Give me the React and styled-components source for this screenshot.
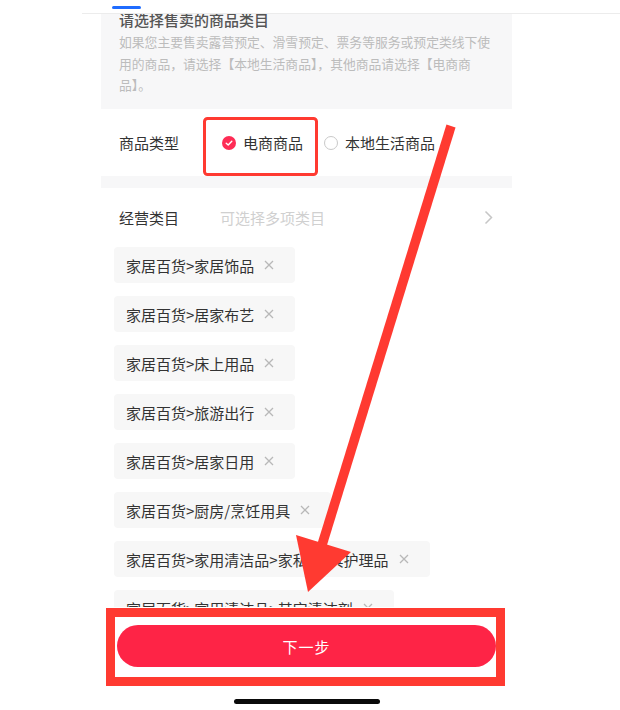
import React from 'react'
import styled, { createGlobalStyle } from 'styled-components'

//-- category picker step, with the red review annotations drawn over it

const GlobalStyle = createGlobalStyle`
  html, body {
    margin: 0;
    padding: 0;
    background: #fff;
  }
  body {
    font-family: "Noto Sans CJK SC", "Noto Sans", sans-serif;
  }
`;

const Page = styled.div`
  position: relative;
  width: 620px;
  height: 710px;
  overflow: hidden;
  background: #fff;
`;

const TopBar = styled.div`
  margin-left: 82px;
  height: 14px;
  box-sizing: border-box;
  padding: 6px 0 0 30px;
  border-bottom: 1px solid #ececec;
`;

const TabIndicator = styled.div`
  width: 29px;
  height: 3px;
  border-radius: 2px;
  background: #1f6cff;
`;

const Column = styled.div`
  margin-left: 101px;
  width: 411px;
  display: flex;
  flex-direction: column;
`;

const Scroll = styled.div`
  height: 593px;
  overflow: hidden;
  display: flex;
  flex-direction: column;
`;

const Notice = styled.div`
  margin-top: -5px;
  padding: 0 12px 13.5px 18px;
  background: #f7f7f8;
`;

const NoticeTitle = styled.div`
  font-size: 15px;
  line-height: 22px;
  font-weight: 500;
  color: #555;
`;

const NoticeText = styled.div`
  font-size: 12.8px;
  line-height: 21.5px;
  color: #bcbcbc;
`;

const FieldRow = styled.div`
  height: ${p => p.$height}px;
  padding: 0 19px 0 18px;
  display: flex;
  align-items: center;
  flex-shrink: 0;
`;

const FieldLabel = styled.div`
  flex: 0 0 ${p => p.$width}px;
  font-size: 15px;
  color: #333;
`;

const RadioGroup = styled.div`
  display: flex;
  align-items: center;
  gap: 21px;
`;

const RadioOption = styled.div`
  display: flex;
  align-items: center;
  gap: 7px;
  font-size: 15px;
  color: #333;
`;

const RadioDot = styled.span`
  width: 14px;
  height: 14px;
  box-sizing: border-box;
  border-radius: 50%;
  display: flex;
  align-items: center;
  justify-content: center;
  background: ${p => (p.$checked ? '#fe2c55' : '#fff')};
  border: ${p => (p.$checked ? 'none' : '1px solid #c9c9c9')};
`;

const Gap = styled.div`
  height: 12px;
  flex-shrink: 0;
  background: #f7f7f8;
`;

const Placeholder = styled.div`
  flex: 1;
  font-size: 15px;
  color: #d0d0d0;
`;

const TagList = styled.div`
  padding-left: 13px;
  display: flex;
  flex-direction: column;
  align-items: flex-start;
  gap: 13px;
`;

const Tag = styled.div`
  height: 36px;
  flex-shrink: 0;
  padding: 0 18px 0 12px;
  border-radius: 4px;
  background: #f7f7f7;
  display: flex;
  align-items: center;
  gap: 7px;
  font-size: 15px;
  color: #333;
  white-space: nowrap;
`;

const BottomBar = styled.div`
  height: 103px;
  padding: 18px 16px 0;
  box-sizing: border-box;
  background: #fff;
  display: flex;
  flex-direction: column;
  align-items: center;
`;

const NextButton = styled.button`
  width: 100%;
  height: 42px;
  border: none;
  border-radius: 21px;
  background: #fe2446;
  color: #fff;
  font-family: inherit;
  font-size: 15px;
  letter-spacing: 1px;
`;

const HomeIndicator = styled.div`
  margin-top: 32px;
  width: 146px;
  height: 5px;
  border-radius: 3px;
  background: #0a0a0a;
`;

const Overlay = styled.svg`
  position: absolute;
  left: 0;
  top: 0;
  pointer-events: none;
`;

const categories = [
  '家居百货>家居饰品',
  '家居百货>居家布艺',
  '家居百货>床上用品',
  '家居百货>旅游出行',
  '家居百货>居家日用',
  '家居百货>厨房/烹饪用具',
  '家居百货>家用清洁品>家私/家具护理品',
  '家居百货>家用清洁品>其它清洁剂',
];

const CloseIcon = () => (
  <svg width="16" height="16" viewBox="0 0 16 16">
    <path d="M4 4 L12 12 M12 4 L4 12" stroke="#b8b8b8" strokeWidth="1.3" fill="none" />
  </svg>
);

const CheckMark = () => (
  <svg width="8" height="8" viewBox="0 0 8 8">
    <path d="M1.2 4.2 L3.2 6 L6.8 2.2" stroke="#fff" strokeWidth="1.4" fill="none" strokeLinecap="round" strokeLinejoin="round" />
  </svg>
);

const Chevron = () => (
  <svg width="9" height="15" viewBox="0 0 9 15">
    <path d="M1.5 1.5 L7.5 7.5 L1.5 13.5" stroke="#c6c6c6" strokeWidth="1.5" fill="none" />
  </svg>
);

const Radio = ({ checked, label }) => (
  <RadioOption>
    <RadioDot $checked={checked}>{checked && <CheckMark />}</RadioDot>
    {label}
  </RadioOption>
);

const Annotations = () => (
  <Overlay width="620" height="710" viewBox="0 0 620 710">
    <rect x="204.5" y="118.5" width="112" height="56" rx="3" fill="none" stroke="#ff3a31" strokeWidth="3" />
    <line x1="451" y1="126" x2="322" y2="545" stroke="#ff3a31" strokeWidth="9.5" />
    <polygon points="296,535 351,552 308,592" fill="#ff3a31" />
    <rect x="110.5" y="612.5" width="390" height="69" fill="none" stroke="#ff3a31" strokeWidth="9" />
  </Overlay>
);

const App = () => (
  <Page>
    <GlobalStyle />
    <TopBar>
      <TabIndicator />
    </TopBar>
    <Column>
      <Scroll>
        <Notice>
          <NoticeTitle>请选择售卖的商品类目</NoticeTitle>
          <NoticeText>
            如果您主要售卖露营预定、滑雪预定、票务等服务或预定类线下使用的商品，请选择【本地生活商品】，其他商品请选择【电商商品】。
          </NoticeText>
        </Notice>
        <FieldRow $height={67}>
          <FieldLabel $width={103}>商品类型</FieldLabel>
          <RadioGroup>
            <Radio checked label="电商商品" />
            <Radio label="本地生活商品" />
          </RadioGroup>
        </FieldRow>
        <Gap />
        <FieldRow $height={59}>
          <FieldLabel $width={101}>经营类目</FieldLabel>
          <Placeholder>可选择多项类目</Placeholder>
          <Chevron />
        </FieldRow>
        <TagList>
          {categories.map(c => (
            <Tag key={c}>
              {c}
              <CloseIcon />
            </Tag>
          ))}
        </TagList>
      </Scroll>
      <BottomBar>
        <NextButton>下一步</NextButton>
        <HomeIndicator />
      </BottomBar>
    </Column>
    <Annotations />
  </Page>
);

export default App;
